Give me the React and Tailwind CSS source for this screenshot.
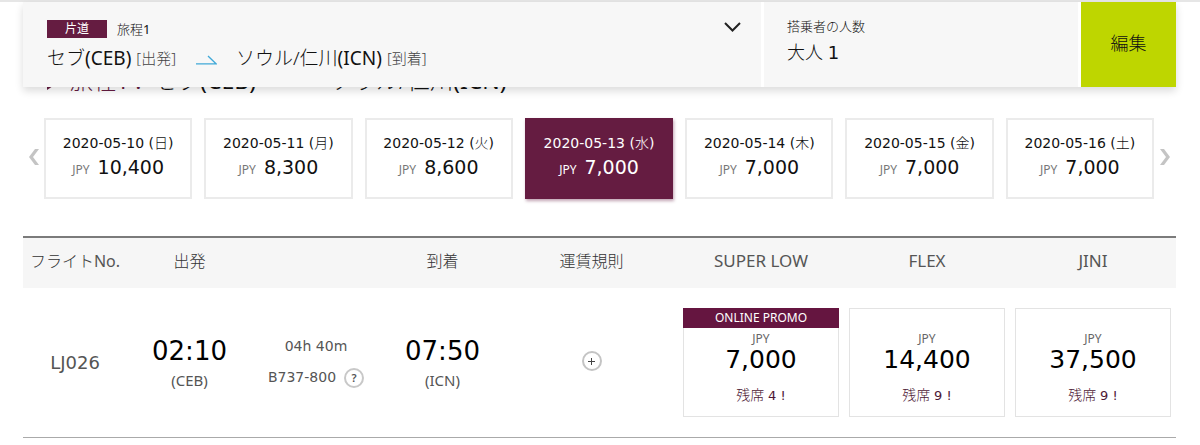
const days = [
  { date: "2020-05-10", day: "日", price: "10,400" },
  { date: "2020-05-11", day: "月", price: "8,300" },
  { date: "2020-05-12", day: "火", price: "8,600" },
  { date: "2020-05-13", day: "水", price: "7,000", selected: true },
  { date: "2020-05-14", day: "木", price: "7,000" },
  { date: "2020-05-15", day: "金", price: "7,000" },
  { date: "2020-05-16", day: "土", price: "7,000" },
];

const fares = [
  { name: "SUPER LOW", price: "7,000", seats: 4, promo: "ONLINE PROMO" },
  { name: "FLEX", price: "14,400", seats: 9 },
  { name: "JINI", price: "37,500", seats: 9 },
];

function Header() {
  return (
    <header className="sticky top-0 z-10 flex h-[85px] gap-[3px] bg-white shadow-[0_4px_8px_rgba(0,0,0,0.14)]">
      <section className="flex flex-1 items-start justify-between bg-[#f7f7f7] pl-6 pr-5 pt-[17px]">
        <div>
          <div className="flex items-center gap-[10px]">
            <span className="w-[60px] bg-[#651c41] text-center text-xs font-normal leading-[18px] text-white">片道</span>
            <span className="text-[13px] leading-5">旅程<span className="font-normal">1</span></span>
          </div>
          <div className="mt-[3px] flex items-center text-[19px] leading-8">
            <span>セブ<span className="font-normal">(CEB)</span></span>
            <span className="ml-[5px] text-[15px] leading-8 text-[#444]">[出発]</span>
            <svg className="ml-5 mr-[19px] mt-1 h-2.5 w-[21px]" viewBox="0 0 21 10" fill="none" stroke="#41a9d8" strokeWidth="1.3" aria-hidden="true">
              <path d="M0 8.8H20L12 1" />
            </svg>
            <span>ソウル/仁川<span className="font-normal">(ICN)</span></span>
            <span className="ml-[5px] text-[15px] leading-8 text-[#444]">[到着]</span>
          </div>
        </div>
        <button type="button" aria-label="旅程を開く" className="pt-[3px]">
          <svg className="h-[10px] w-[17px]" viewBox="0 0 17 10" fill="none" stroke="#222" strokeWidth="2" aria-hidden="true">
            <path d="M1 1l7.5 7.5L16 1" />
          </svg>
        </button>
      </section>
      <section className="w-[314px] bg-[#f7f7f7] pl-[23px] pt-[14px]">
        <p className="text-[13px] leading-5">搭乗者の人数</p>
        <p className="mt-1 text-lg leading-6">大人 <span className="font-['DejaVu_Sans'] font-normal">1</span></p>
      </section>
      <button type="button" className="w-[95px] bg-[#bed600] pb-1 text-lg font-light">編集</button>
    </header>
  );
}

function Arrow({ next }) {
  return (
    <button type="button" aria-label={next ? "次の日付" : "前の日付"} className={next ? "flex w-[22px] items-center justify-center pb-1" : "flex w-[21px] items-center justify-center pb-1"}>
      <svg className="h-[18px] w-3" viewBox="0 0 12 18" fill="#c4c4c4" aria-hidden="true">
        <path d={next ? "M1 1h4l6 8-6 8H1l6-8z" : "M11 1H7L1 9l6 8h4L5 9z"} />
      </svg>
    </button>
  );
}

function DayCard({ item }) {
  return (
    <button
      type="button"
      aria-pressed={!!item.selected}
      className={
        item.selected
          ? "h-[81px] border-2 border-[#651c41] bg-[#651c41] pb-2 text-white shadow-[1px_2px_3px_rgba(101,28,65,0.4)]"
          : "h-[81px] border-2 border-[#ebebeb] bg-white pb-2"
      }
    >
      <span className="block whitespace-nowrap font-['DejaVu_Sans','Noto_Sans_CJK_JP'] text-sm font-normal leading-6">
        {item.date} (<span className="font-light">{item.day}</span>)
      </span>
      <span className="flex items-baseline justify-center gap-2 leading-6">
        <span className={item.selected ? "text-xs font-normal" : "text-xs font-normal text-[#777]"}>JPY</span>
        <span className="font-['DejaVu_Sans'] text-[19px] font-normal">{item.price}</span>
      </span>
    </button>
  );
}

function Stop({ time, code }) {
  return (
    <td>
      <div className="pt-1 font-['DejaVu_Sans'] text-[26px] font-normal leading-8 text-black">{time}</div>
      <div className="text-[15px] font-normal leading-[26px] text-[#555]">({code})</div>
    </td>
  );
}

function Fare({ fare }) {
  return (
    <td className="px-[5px] pt-px">
      <button type="button" className="flex h-[109px] w-full flex-col border border-[#e3e3e3] bg-white text-center">
        <span className={fare.promo ? "-mx-px -mt-px h-5 self-stretch bg-[#651540] text-xs font-normal leading-[19px] text-white" : "h-[19px]"}>
          {fare.promo}
        </span>
        <span className="mt-[3px] w-full text-xs font-normal leading-4 text-[#666]">JPY</span>
        <span className="w-full font-['DejaVu_Sans'] text-[25px] font-normal leading-[26px] text-black">{fare.price}</span>
        <span className="mt-[10px] w-full text-sm leading-6 text-[#4d1735]">
          残席 <span className="font-['DejaVu_Sans'] text-[13px] font-normal">{fare.seats} !</span>
        </span>
      </button>
    </td>
  );
}

export default function App() {
  return (
    <div className="border-t-2 border-[#e6e6e6] bg-white pb-2 pl-[23px] pr-6 font-['Noto_Sans','Noto_Sans_CJK_JP',sans-serif] font-light text-[#111]">
      <Header />
      <main>
        <h1 className="-mt-[23px] flex h-8 items-center pl-6 text-[23px] leading-8">
          <svg className="mr-3.5 mt-2 h-3 w-[9px]" viewBox="0 0 9 12" fill="#651c41" aria-hidden="true">
            <path d="M0 0l9 6-9 6z" />
          </svg>
          <span className="w-[84px] whitespace-nowrap text-[#651c41]">旅程<span className="font-normal">1 :</span></span>
          <span>セブ<span className="font-normal">(CEB)</span></span>
          <span className="w-[74px]" />
          <span>ソウル/仁川<span className="font-normal">(ICN)</span></span>
        </h1>
        <nav aria-label="日付" className="mt-[22px] flex items-stretch">
          <Arrow />
          <div className="grid flex-1 grid-cols-7 gap-3">
            {days.map((item) => (
              <DayCard key={item.date} item={item} />
            ))}
          </div>
          <Arrow next />
        </nav>
        <table className="mt-[37px] w-full table-fixed border-collapse text-center">
          <colgroup>
            <col className="w-[104px]" />
            <col className="w-[125px]" />
            <col className="w-[128px]" />
            <col className="w-[125px]" />
            <col className="w-[173px]" />
            <col className="w-[166px]" />
            <col className="w-[166px]" />
            <col className="w-[166px]" />
          </colgroup>
          <thead>
            <tr className="h-[51px] border-t-2 border-[#7b7b7b] bg-[#f6f6f6] text-base text-[#333] [&>th]:pb-1">
              <th scope="col" className="whitespace-nowrap font-light">フライト<span className="font-normal text-[#555]">No.</span></th>
              <th scope="col" className="font-light">出発</th>
              <td />
              <th scope="col" className="font-light">到着</th>
              <th scope="col" className="font-light">運賃規則</th>
              {fares.map((fare) => (
                <th scope="col" key={fare.name} className="text-[17px] font-normal text-[#555]">{fare.name}</th>
              ))}
            </tr>
          </thead>
          <tbody>
            <tr className="h-[149px] border-b border-[#aaa]">
              <td className="font-['DejaVu_Sans'] text-[18px] font-normal text-[#555]">LJ026</td>
              <Stop time="02:10" code="CEB" />
              <td className="font-['DejaVu_Sans'] text-sm font-normal text-[#555]">
                <div className="leading-[31px]">04h 40m</div>
                <div className="flex items-center justify-center gap-2 leading-[31px]">
                  B737-800
                  <button type="button" aria-label="機種の説明" className="h-5 w-5 rounded-full border-2 border-[#c8c8c8] font-['Noto_Sans'] text-[11px] font-semibold leading-4">?</button>
                </div>
              </td>
              <Stop time="07:50" code="ICN" />
              <td>
                <button type="button" aria-label="運賃規則を表示" className="mb-1 inline-flex h-5 w-5 items-center justify-center rounded-full border-2 border-[#c4c4c4] align-middle">
                  <svg className="h-[7px] w-[7px]" viewBox="0 0 7 7" stroke="#444" aria-hidden="true">
                    <path d="M3.5 0v7M0 3.5h7" />
                  </svg>
                </button>
              </td>
              {fares.map((fare) => (
                <Fare key={fare.name} fare={fare} />
              ))}
            </tr>
          </tbody>
        </table>
      </main>
    </div>
  );
}
